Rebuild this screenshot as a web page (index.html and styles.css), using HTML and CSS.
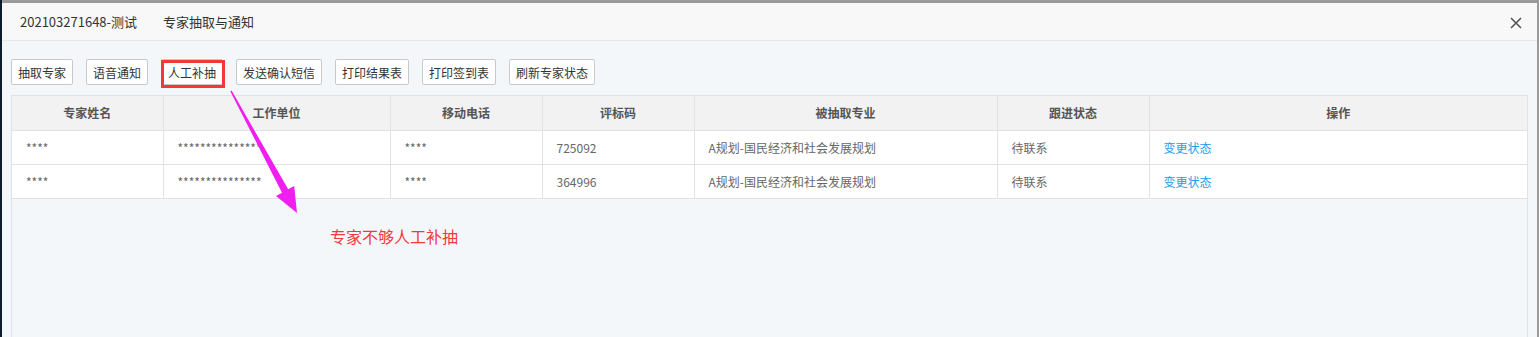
FILE: index.html
```html
<!DOCTYPE html>
<html lang="zh-CN">
<head>
    <meta charset="UTF-8">
    <meta name="viewport" content="width=device-width, initial-scale=1.0">
    <title>专家抽取与通知</title>

    <link rel="stylesheet" href="styles.css">
</head>
<body>
<div class="side"></div>
<div class="dialog">
    <div class="dialog-head">
        <span class="head-title">202103271648-测试</span>
        <span class="head-title">专家抽取与通知</span>
        <span class="close">
            <svg width="12" height="12" viewBox="0 0 12 12"><path d="M1 1L11 11M11 1L1 11" stroke="#555" stroke-width="1.6" fill="none"/></svg>
        </span>
    </div>

    <div class="dialog-body">
        <div class="toolbar">
            <button class="t-btn">抽取专家</button>
            <button class="t-btn">语音通知</button>
            <button class="t-btn marked">人工补抽</button>
            <button class="t-btn">发送确认短信</button>
            <button class="t-btn">打印结果表</button>
            <button class="t-btn">打印签到表</button>
            <button class="t-btn">刷新专家状态</button>
        </div>

        <div class="grid">
            <table class="expert-table">
                <colgroup>
                    <col style="width:151px">
                    <col style="width:227px">
                    <col style="width:152px">
                    <col style="width:152px">
                    <col style="width:303px">
                    <col style="width:152px">
                    <col>
                </colgroup>
                <thead>
                    <tr>
                        <th>专家姓名</th>
                        <th>工作单位</th>
                        <th>移动电话</th>
                        <th>评标码</th>
                        <th>被抽取专业</th>
                        <th>跟进状态</th>
                        <th>操作</th>
                    </tr>
                </thead>
                <tbody>
                    <tr>
                        <td>****</td>
                        <td>***************</td>
                        <td>****</td>
                        <td>725092</td>
                        <td>A规划-国民经济和社会发展规划</td>
                        <td>待联系</td>
                        <td><a class="op-link" href="#">变更状态</a></td>
                    </tr>
                    <tr>
                        <td>****</td>
                        <td>***************</td>
                        <td>****</td>
                        <td>364996</td>
                        <td>A规划-国民经济和社会发展规划</td>
                        <td>待联系</td>
                        <td><a class="op-link" href="#">变更状态</a></td>
                    </tr>
                </tbody>
            </table>
        </div>
    </div>
</div>

<!-- annotation drawn over the screenshot -->
<p class="note">专家不够人工补抽</p>
<svg class="arrow" width="1539" height="337" viewBox="0 0 1539 337">
    <polygon points="231.6,90.6 288.2,189.3 294.2,186 297,213 276,196 282,192.7 230.4,91.4" fill="#f01ef0"/>
</svg>
</body>
</html>
```

FILE: styles.css
```css
*{
    box-sizing: border-box;
}
body{
    margin: 0;
    height: 100vh;
    overflow: hidden;
    display: flex;
    background-color: #9a9a9a;
    font-family: "Noto Sans CJK SC", "Noto Sans", sans-serif;
    font-size: 12px;
    color: #666;
}

.side{
    width: 2px;
    background-color: #0e1b2b;
}

.dialog{
    flex: 1;
    margin-top: 3px;
    margin-right: 2px;
    display: flex;
    flex-direction: column;
    background-color: #f4f7fa;
}

.dialog-head{
    height: 38px;
    display: flex;
    align-items: center;
    gap: 26px;
    padding: 0 15px 0 18px;
    background-color: #f8f8f8;
    border-bottom: 1px solid #e8e8e8;
}
.head-title{
    font-size: 13px;
    color: #333;
}
.close{
    margin-left: auto;
    display: flex;
    margin-top: 2px;
}

.dialog-body{
    flex: 1;
    display: flex;
    flex-direction: column;
    padding: 18px 9px 0 9px;
}

.toolbar{
    display: flex;
    gap: 13px;
    margin-bottom: 10px;
}
.t-btn{
    position: relative;
    height: 26px;
    padding: 0 6px;
    background-color: #fff;
    border: 1px solid #c9c9c9;
    border-radius: 2px;
    font-family: inherit;
    font-size: 12px;
    color: #333;
    cursor: pointer;
}
.marked::after{
    content: '';
    position: absolute;
    top: 0;
    left: -1px;
    right: -3px;
    bottom: -4px;
    border: 3px solid #f2383a;
}

.grid{
    flex: 1;
    border: 1px solid #e2e2e2;
    border-bottom: none;
}
.expert-table{
    width: 100%;
    table-layout: fixed;
    border-collapse: collapse;
}
.expert-table th,
.expert-table td{
    height: 34px;
    border: 1px solid #e2e2e2;
    padding: 0 14px;
    text-align: left;
    white-space: nowrap;
    overflow: hidden;
}
.expert-table tr > :first-child{
    border-left: none;
}
.expert-table tr > :last-child{
    border-right: none;
}
.expert-table thead th{
    border-top: none;
    text-align: center;
    background-color: #f2f2f2;
    color: #555;
    font-weight: bold;
}
.expert-table td{
    background-color: #fff;
}
.op-link{
    color: #1b9ce8;
    text-decoration: none;
}

.note{
    position: absolute;
    left: 330px;
    top: 224px;
    margin: 0;
    font-size: 16px;
    color: #f2383a;
}
.arrow{
    position: absolute;
    left: 0;
    top: 0;
    pointer-events: none;
}
```
